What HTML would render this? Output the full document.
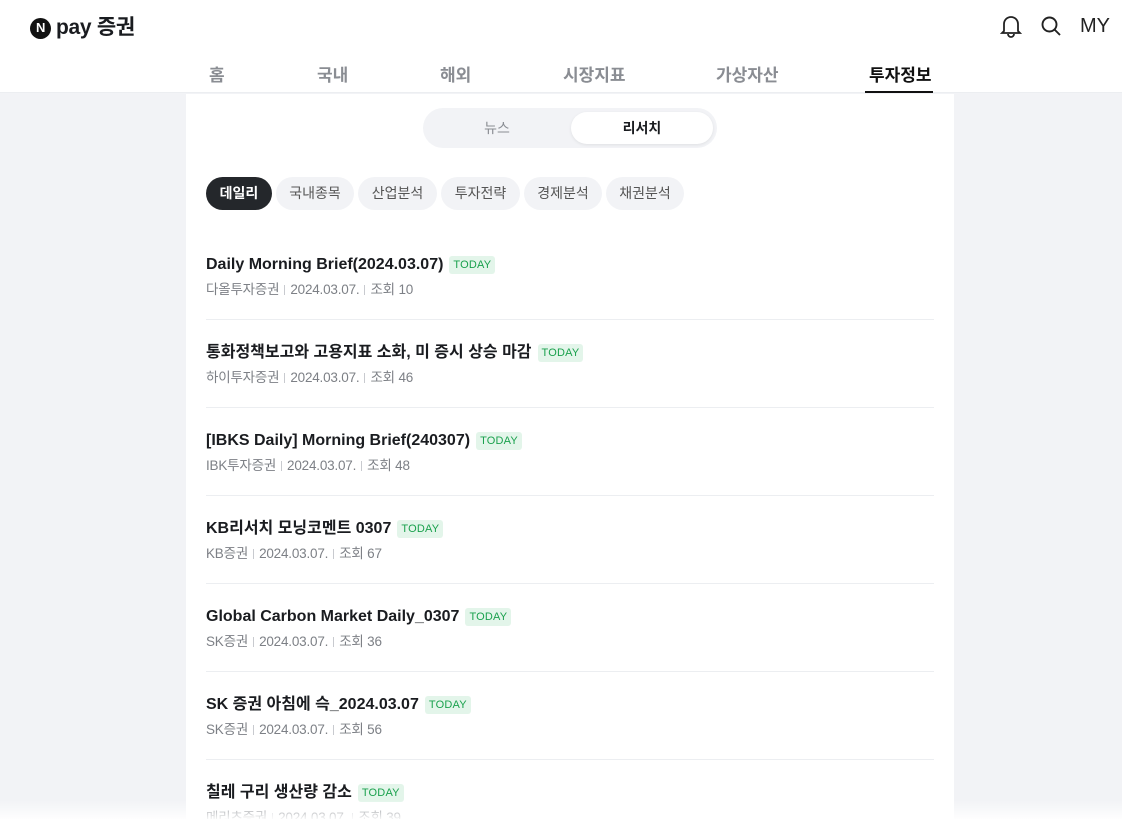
<!DOCTYPE html>
<html><head><meta charset="utf-8"><style>
*{margin:0;padding:0;box-sizing:border-box}
html,body{width:1122px;height:819px;overflow:hidden}
body{background:#f2f3f6;font-family:"Liberation Sans","Noto Sans CJK KR",sans-serif;color:#1a1c20;position:relative}
.hdr{position:absolute;left:0;top:0;width:1122px;height:93px;background:#fff;border-bottom:1px solid #eceef1}
.logo{position:absolute;left:30px;top:15px;display:flex;align-items:center;font-size:21px;font-weight:bold;letter-spacing:-0.3px;line-height:26px}
.logo .n{width:21px;height:21px;border-radius:50%;background:#111;color:#fff;font-size:13px;display:flex;align-items:center;justify-content:center;margin-right:5px}
.icons{position:absolute;right:12px;top:14px;display:flex;align-items:center;gap:18px}
.my{font-size:20px;color:#222}
.nav{position:absolute;top:64px;font-size:17px;font-weight:bold;color:#8a8d93;line-height:24px}
.nav.on{color:#111}
.ul{position:absolute;left:865px;top:91px;width:68px;height:2px;background:#111}
.main{position:absolute;left:186px;top:94px;width:768px;height:725px;background:#fff;overflow:hidden}
.seg{position:absolute;left:237px;top:14px;width:294px;height:40px;border-radius:20px;background:#f2f3f6}
.seg .a{position:absolute;left:148px;top:4px;width:142px;height:32px;border-radius:16px;background:#fff;box-shadow:0 1px 3px rgba(0,0,0,.08);font-size:14px;font-weight:bold;text-align:center;line-height:32px}
.seg .b{position:absolute;left:0;top:4px;width:148px;height:32px;font-size:14px;color:#8a8d93;text-align:center;line-height:32px}
.chip{position:absolute;top:83px;height:33px;border-radius:17px;background:#f2f3f6;font-size:14px;color:#555;text-align:center;line-height:33px}
.chip.on{background:#24272b;color:#fff;font-weight:bold}
.item{position:absolute;left:20px;width:728px;height:88px;border-bottom:1px solid #eceef1}
.t{position:absolute;top:22px;height:22px;line-height:22px;font-size:16px;font-weight:bold;white-space:nowrap;display:flex;align-items:center}
.tag{margin-left:6px;background:#e3f5ea;color:#1aa14d;font-size:11px;font-weight:normal;height:18px;line-height:18px;padding:0 4px;border-radius:3px;letter-spacing:.2px}
.m{position:absolute;top:49px;height:18px;line-height:18px;font-size:13.5px;color:#7d8086;white-space:nowrap;letter-spacing:-0.2px}
.m i{display:inline-block;width:1px;height:10px;background:#c8cacf;margin:0 5px;vertical-align:-1px}
.fade{position:absolute;left:0;top:800px;width:1122px;height:19px;background:linear-gradient(rgba(255,255,255,0),rgba(255,255,255,.9))}
</style></head><body>
<div class="hdr">
<div class="logo"><span class="n">N</span>pay 증권</div>
<div class="icons">
<svg width="22" height="24" viewBox="0 0 22 24" fill="none" stroke="#222" stroke-width="1.8"><path d="M4 17V10a7 7 0 0 1 14 0v7l2 2H2z"/><path d="M8 20a3 3 0 0 0 6 0"/></svg>
<svg width="22" height="22" viewBox="0 0 22 22" fill="none" stroke="#222" stroke-width="1.9"><circle cx="9.5" cy="9.5" r="7"/><path d="M14.5 14.5L20 20"/></svg>
<span class="my">MY</span>
</div>
<span class="nav" style="left:209px">홈</span>
<span class="nav" style="left:317px">국내</span>
<span class="nav" style="left:440px">해외</span>
<span class="nav" style="left:563px">시장지표</span>
<span class="nav" style="left:716px">가상자산</span>
<span class="nav on" style="left:869px">투자정보</span>
<div class="ul"></div>
</div>
<div class="main">
<div class="seg"><div class="b">뉴스</div><div class="a">리서치</div></div>
<div class="chip on" style="left:20px;width:66px">데일리</div>
<div class="chip" style="left:90px;width:78px">국내종목</div>
<div class="chip" style="left:172px;width:79px">산업분석</div>
<div class="chip" style="left:255px;width:79px">투자전략</div>
<div class="chip" style="left:338px;width:78px">경제분석</div>
<div class="chip" style="left:420px;width:78px">채권분석</div>

<div class="item" style="top:138px"><div class="t">Daily Morning Brief(2024.03.07)<span class="tag">TODAY</span></div><div class="m">다올투자증권<i></i>2024.03.07.<i></i>조회 10</div></div>
<div class="item" style="top:226px"><div class="t">통화정책보고와 고용지표 소화, 미 증시 상승 마감<span class="tag">TODAY</span></div><div class="m">하이투자증권<i></i>2024.03.07.<i></i>조회 46</div></div>
<div class="item" style="top:314px"><div class="t">[IBKS Daily] Morning Brief(240307)<span class="tag">TODAY</span></div><div class="m">IBK투자증권<i></i>2024.03.07.<i></i>조회 48</div></div>
<div class="item" style="top:402px"><div class="t">KB리서치 모닝코멘트 0307<span class="tag">TODAY</span></div><div class="m">KB증권<i></i>2024.03.07.<i></i>조회 67</div></div>
<div class="item" style="top:490px"><div class="t">Global Carbon Market Daily_0307<span class="tag">TODAY</span></div><div class="m">SK증권<i></i>2024.03.07.<i></i>조회 36</div></div>
<div class="item" style="top:578px"><div class="t">SK 증권 아침에 슥_2024.03.07<span class="tag">TODAY</span></div><div class="m">SK증권<i></i>2024.03.07.<i></i>조회 56</div></div>
<div class="item" style="top:666px"><div class="t">칠레 구리 생산량 감소<span class="tag">TODAY</span></div><div class="m">메리츠증권<i></i>2024.03.07.<i></i>조회 39</div></div>
</div>
<div class="fade"></div>
</body></html>
